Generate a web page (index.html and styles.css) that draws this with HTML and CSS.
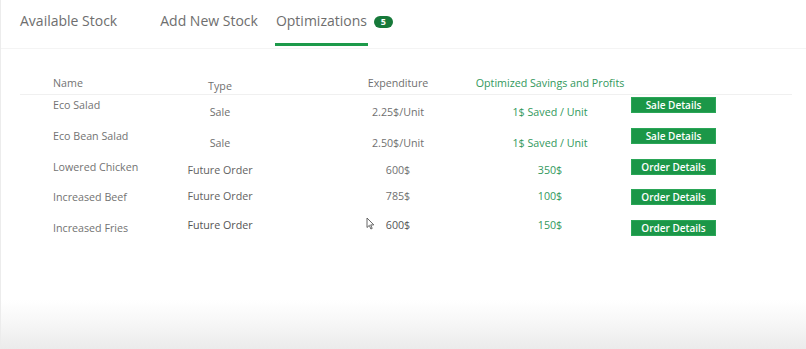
FILE: index.html
```html
<!DOCTYPE html>
<html lang="en">
<head>
<meta charset="utf-8">
<title>Optimizations</title>
<link rel="stylesheet" href="styles.css">
</head>
<body>
<div class="page">
  <nav class="tabs">
    <a class="tab tab-first">Available Stock</a>
    <a class="tab">Add New Stock</a>
    <a class="tab active">Optimizations</a>
    <span class="badge">5</span>
  </nav>

  <div class="table">
    <div class="row head">
      <div class="cell name">Name</div>
      <div class="cell center down3">Type</div>
      <div class="cell center">Expenditure</div>
      <div class="cell center green">Optimized Savings and Profits</div>
      <div class="cell"></div>
    </div>

    <div class="row sale">
      <div class="cell name">Eco Salad</div>
      <div class="cell center">Sale</div>
      <div class="cell center">2.25$/Unit</div>
      <div class="cell center green">1$ Saved / Unit</div>
      <div class="cell"><button class="btn">Sale Details</button></div>
    </div>

    <div class="row sale">
      <div class="cell name">Eco Bean Salad</div>
      <div class="cell center">Sale</div>
      <div class="cell center">2.50$/Unit</div>
      <div class="cell center green">1$ Saved / Unit</div>
      <div class="cell"><button class="btn">Sale Details</button></div>
    </div>

    <div class="row order-a">
      <div class="cell name">Lowered Chicken</div>
      <div class="cell center dark">Future Order</div>
      <div class="cell center">600$</div>
      <div class="cell center green">350$</div>
      <div class="cell"><button class="btn">Order Details</button></div>
    </div>

    <div class="row order-b">
      <div class="cell name">Increased Beef</div>
      <div class="cell center dark">Future Order</div>
      <div class="cell center">785$</div>
      <div class="cell center green">100$</div>
      <div class="cell"><button class="btn">Order Details</button></div>
    </div>

    <div class="row order-c">
      <div class="cell name">Increased Fries</div>
      <div class="cell center darker">Future Order</div>
      <div class="cell center darker">600$</div>
      <div class="cell center green">150$</div>
      <div class="cell"><button class="btn">Order Details</button></div>
    </div>
  </div>

  <svg class="cursor" width="9" height="13" viewBox="0 0 9 13" aria-hidden="true">
    <path d="M1 1 L1 10.5 L3.3 8.4 L4.9 12 L6.2 11.4 L4.7 7.9 L7.8 7.9 Z" fill="#fff" stroke="#555" stroke-width="0.9" stroke-linejoin="round"/>
  </svg>
</div>
</body>
</html>
```

FILE: styles.css
```css
html, body {
  margin: 0;
  padding: 0;
}

body {
  font-family: "Open Sans", "Noto Sans", "DejaVu Sans", sans-serif;
  color: #707070;
  background: #fff;
}

.page {
  position: relative;
  width: 806px;
  height: 349px;
  box-sizing: border-box;
  border-left: 1px solid #ececec;
  background: linear-gradient(to bottom, #ffffff 0px, #ffffff 300px, #f7f7f7 322px, #ebebeb 349px);
  overflow: hidden;
}

/* Tabs */
.tabs {
  display: flex;
  align-items: flex-start;
  padding-left: 18px;
  border-bottom: 1px solid #f4f4f4;
  height: 49px;
  box-sizing: border-box;
}

.tab {
  display: block;
  font-size: 14px;
  line-height: 20px;
  color: #6e6e6e;
  padding: 11px 1px 12px;
  border-bottom: 3px solid transparent;
  margin-right: 16px;
  white-space: nowrap;
}

.tab-first {
  margin-right: 41px;
}

.tab.active {
  border-bottom-color: #1d9a4a;
  margin-right: 6px;
}

.badge {
  margin-top: 16px;
  display: inline-flex;
  align-items: center;
  justify-content: center;
  width: 19px;
  height: 12px;
  border-radius: 6px;
  background: #17793a;
  color: #fff;
  font-size: 9px;
  font-weight: 700;
  line-height: 12px;
}

/* Table */
.table {
  margin: 25px 14px 0 19px;
}

.row {
  display: grid;
  grid-template-columns: 108px 118px 238px 66px 1fr;
  padding-left: 33px;
  align-items: start;
  height: 30.75px;
  box-sizing: border-box;
  padding-top: 2px;
  font-size: 10.7px;
  line-height: 16px;
}

.row.head {
  height: 21px;
  padding-top: 0;
  border-bottom: 1px solid #f0f0f0;
  line-height: 18px;
}

.cell {
  white-space: nowrap;
}

.center {
  display: flex;
  justify-content: center;
}

.name {
  color: #737373;
}

.green {
  color: #32985c;
}

.dark {
  color: #626262;
}

.darker {
  color: #555555;
}

.down3 {
  margin-top: 3px;
}

.sale .center {
  margin-top: 7px;
}

.order-a .center {
  margin-top: 3px;
}

.order-b .center {
  margin-top: -1px;
}

.order-c .center {
  margin-top: -3px;
}

.btn {
  display: block;
  margin-left: 48px;
  width: 85px;
  height: 16px;
  padding: 0;
  border: 1px solid #2aa657;
  background: #1b9748;
  color: #fff;
  font-family: "Open Sans", "Noto Sans", sans-serif;
  font-size: 10px;
  font-weight: 600;
  line-height: 14px;
  text-align: center;
}

/* mouse pointer overlay */
.cursor {
  position: absolute;
  left: 365px;
  top: 217px;
}
```
